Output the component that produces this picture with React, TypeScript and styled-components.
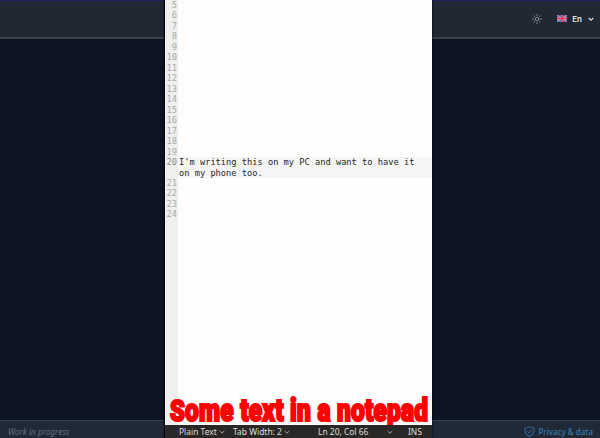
import React from 'react';
import styled, { createGlobalStyle } from 'styled-components';

const GlobalStyle = createGlobalStyle`
  * { box-sizing: border-box; }
  body { margin: 0; overflow: hidden; background: #0d1422; }
`;

const Page = styled.div`
  position: relative;
  display: flex;
  flex-direction: column;
  width: 600px;
  height: 438px;
  background: #0d1422;
  font-family: Inter, sans-serif;
`;

const Header = styled.header`
  display: flex;
  align-items: center;
  justify-content: flex-end;
  height: 39px;
  padding: 0 6px 1px 0;
  border-top: 1px solid #24215f;
  border-bottom: 2px solid #38424f;
  background: #1f2833;
`;

const Language = styled.div`
  display: flex;
  align-items: center;
  margin-left: 15px;
  color: #e3e7ec;
  font-size: 8px;
  font-weight: 600;

  span { margin: 0 6px 0 5px; line-height: 10px; }
  svg { display: block; }
`;

const Content = styled.main`
  flex: 1;
`;

const Footer = styled.footer`
  display: flex;
  align-items: center;
  justify-content: space-between;
  height: 18px;
  padding: 4px 7px 0 8px;
  border-top: 1px solid #384454;
  background: #1f2937;
  font-family: 'Noto Sans', sans-serif;
  font-size: 8.2px;
  line-height: 12px;
`;

const Progress = styled.span`
  color: #67717f;
  font-style: italic;
`;

const Privacy = styled.span`
  display: flex;
  align-items: center;
  gap: 3px;
  color: #3779aa;
  font-size: 8px;
  font-weight: 500;
`;

const Editor = styled.section`
  position: absolute;
  top: 0;
  left: 164px;
  display: flex;
  flex-direction: column;
  width: 268px;
  height: 438px;
  border: solid #05080d;
  border-width: 0 0 0 1px;
  background: #fdfdfc;
  box-shadow: 0 0 2px #04070d;
`;

const Lines = styled.div`
  display: flex;
  flex: 1;
  flex-direction: column;
  background: linear-gradient(to right, #efefee 13px, #fdfdfc 13px);
  font-family: 'DejaVu Sans Mono', monospace;
  font-size: 8.7px;
  line-height: 10.47px;
`;

const Line = styled.div<{ $active?: boolean }>`
  display: grid;
  grid-template-columns: 14px 1fr;
  min-height: 10.47px;
  background: ${p => (p.$active ? 'linear-gradient(to right, #efefee 13px, #f5f6f4 13px)' : 'none')};
`;

const LineNumber = styled.span<{ $active?: boolean }>`
  padding-right: 2px;
  color: ${p => (p.$active ? '#8d8d8d' : '#a9a9a9')};
  display: flex;
  justify-content: flex-end;
`;

const Code = styled.span`
  color: #272727;
  white-space: pre;
`;

const StatusBar = styled.div`
  display: grid;
  grid-template-columns: 54px 85px 69px 21px 1fr;
  align-items: center;
  height: 13px;
  padding: 1px 0 0 14px;
  background: #292826;
  color: #dededb;
  font-family: 'Noto Sans', sans-serif;
  font-size: 8.45px;
  line-height: 12px;
  white-space: nowrap;
  z-index: 1;
`;

const StatusItem = styled.span`
  display: flex;
  align-items: center;
  gap: 2px;
`;

const Caption = styled.div`
  position: absolute;
  left: 5px;
  top: 397px;
  color: #fe0000;
  font-family: Roboto, sans-serif;
  font-size: 31px;
  font-weight: 900;
  letter-spacing: 0.3px;
  line-height: 27px;
  white-space: nowrap;
  -webkit-text-stroke: 2.2px #fe0000;
  transform: scaleX(0.788);
  transform-origin: left;

  &::first-letter { font-size: 30px; }
`;

const Chevron = ({ size = 6, width = 1, color = '#a9a9a5' }: { size?: number; width?: number; color?: string }) => (
  <svg width={size} height={size} viewBox="0 0 6 6" fill="none" stroke={color} strokeWidth={width}>
    <path d="M.7 2 3 4.2 5.3 2" />
  </svg>
);

const SunIcon = () => (
  <svg width="10" height="10" viewBox="0 0 10 10" fill="none" stroke="#98a0a9" strokeWidth=".8" strokeLinecap="round">
    <circle cx="5" cy="5" r="1.8" />
    <path d="M5 .4v1M5 8.6v1M.4 5h1M8.6 5h1M1.8 1.8l.7.7M7.5 7.5l.7.7M1.8 8.2l.7-.7M7.5 2.5l.7-.7" />
  </svg>
);

const Flag = () => (
  <svg width="10" height="7" viewBox="0 0 10 7">
    <path fill="#3458b0" d="M0 0h10v7H0z" />
    <path stroke="#b9b3d4" strokeWidth="1.1" d="m0 0 10 7M10 0 0 7" />
    <path stroke="#e64863" strokeWidth=".7" d="m0 0 10 7M10 0 0 7" />
    <path stroke="#d9b2c8" strokeWidth="2.3" d="M5 0v7M0 3.5h10" />
    <path stroke="#e43a54" strokeWidth="1.7" d="M5 0v7M0 3.5h10" />
  </svg>
);

const ShieldIcon = () => (
  <svg width="11" height="11" viewBox="0 0 11 11" fill="none" stroke="#3779aa" strokeWidth=".9" strokeLinejoin="round">
    <path d="M5.5.6C4.2 1.6 2.7 2 .9 2c-.4 4 1.1 7 4.6 8.4C9 9 10.5 6 10.1 2 8.3 2 6.8 1.6 5.5.6Z" />
    <path d="m3.5 5.4 1.5 1.5 2.6-3" />
  </svg>
);

const lines = Array.from({ length: 20 }, (_, i) => i + 5);
const note = "I'm writing this on my PC and want to have it\non my phone too.";

export default function App() {
  return (
    <>
      <GlobalStyle />
      <Page>
        <Header>
          <SunIcon />
          <Language>
            <Flag />
            <span>En</span>
            <Chevron width={1.2} color="#dce0e5" />
          </Language>
        </Header>
        <Content />
        <Footer>
          <Progress>Work in progress</Progress>
          <Privacy><ShieldIcon />Privacy &amp; data</Privacy>
        </Footer>
        <Editor>
          <Lines>
            {lines.map(n => (
              <Line key={n} $active={n === 20}>
                <LineNumber $active={n === 20}>{n}</LineNumber>
                <Code>{n === 20 ? note : ''}</Code>
              </Line>
            ))}
          </Lines>
          <StatusBar>
            <StatusItem>Plain Text <Chevron /></StatusItem>
            <StatusItem>Tab Width: 2 <Chevron /></StatusItem>
            <StatusItem>Ln 20, Col 66</StatusItem>
            <Chevron />
            <StatusItem>INS</StatusItem>
          </StatusBar>
          <Caption>Some text in a notepad</Caption>
        </Editor>
      </Page>
    </>
  );
}
